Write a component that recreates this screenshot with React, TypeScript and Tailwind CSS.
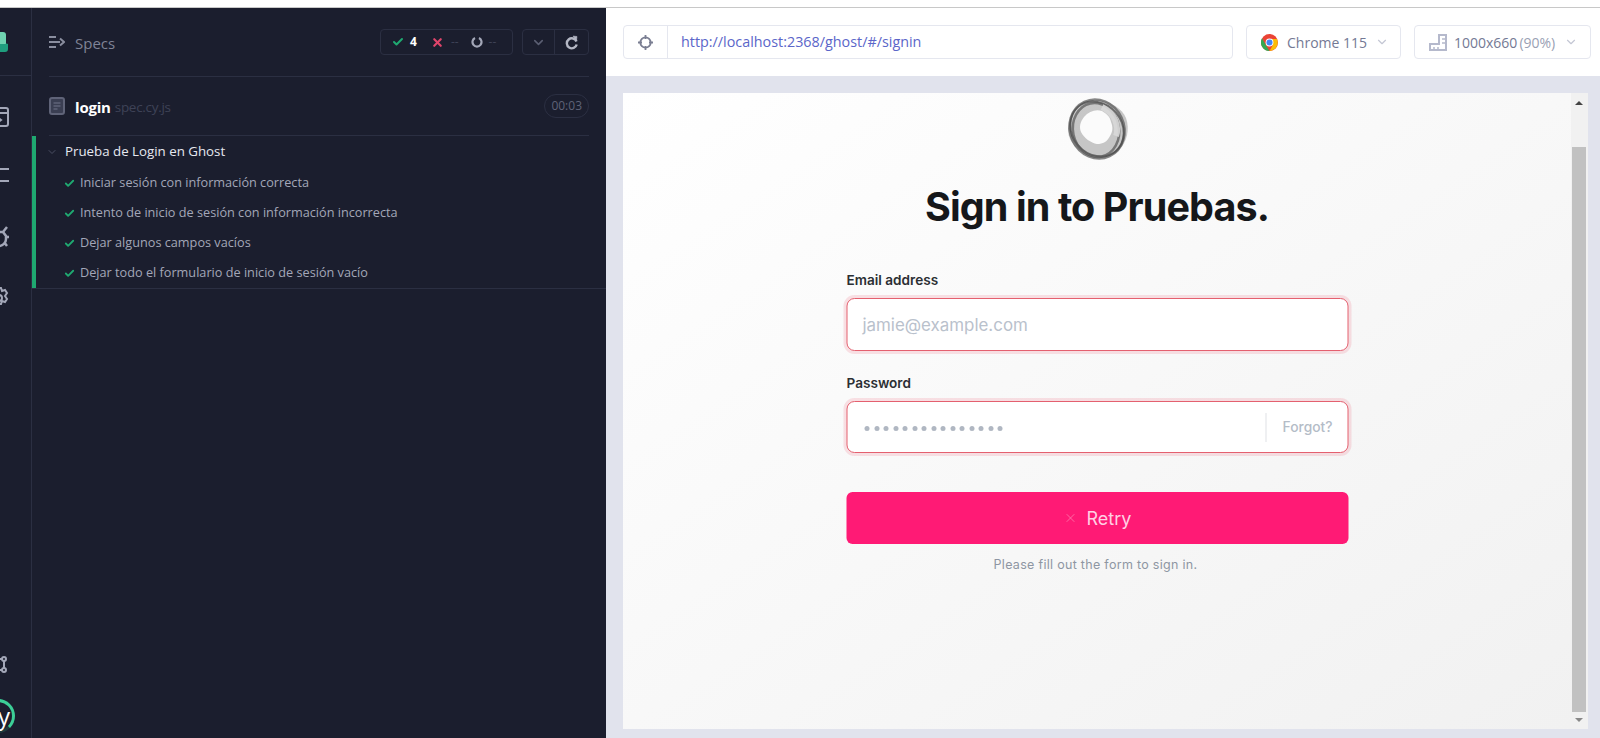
import { Check, ChevronDown, X } from "lucide-react"

const tests = [
  "Iniciar sesión con información correcta",
  "Intento de inicio de sesión con información incorrecta",
  "Dejar algunos campos vacíos",
  "Dejar todo el formulario de inicio de sesión vacío",
]

function Sidebar() {
  return (
    <div className="w-[32px] shrink-0 overflow-hidden border-r border-[#2b2f42] h-full">
      <div className="w-[64px] -ml-[33px] flex flex-col items-center h-full text-[#a3a7b8]">
        {/* logo, cut by the left edge */}
        <div className="w-full h-[68px] border-b border-[#2b2f42] flex justify-center pt-[24px]">
          <svg width="18" height="20" viewBox="0 0 18 20">
            <path d="M0 3a3 3 0 0 1 3-3h10a3 3 0 0 1 3 3v14H0z" fill="#6fd3b1" />
            <path d="M0 12h15a3 3 0 0 1 3 0v5a3 3 0 0 1-3 3H0z" fill="#1f9e7e" />
          </svg>
        </div>
        <svg className="mt-[29px]" width="24" height="24" viewBox="0 0 24 24" fill="none" stroke="currentColor" strokeWidth="2">
          <rect x="3" y="3" width="18" height="18" rx="2" />
          <path d="M3 8h18M10 12l4 3-4 3z" />
        </svg>
        <svg className="mt-[35px]" width="24" height="24" viewBox="0 0 24 24" fill="none" stroke="currentColor" strokeWidth="2">
          <path d="M4 5h18M4 17h18" />
        </svg>
        <svg className="mt-[36px]" width="24" height="24" viewBox="0 0 24 24" fill="none" stroke="currentColor" strokeWidth="2.5">
          <path d="M8 8h8l3 4v3a7 7 0 0 1-14 0v-3zM20 3l-4 5M22 13h-3M20 22l-3-4" />
        </svg>
        <svg className="mt-[38px]" width="24" height="24" viewBox="0 0 24 24" fill="none" stroke="currentColor" strokeWidth="2">
          <circle cx="12" cy="12" r="3" />
          <path d="M10 2h4l1 3 3-1 2 3-2 3 2 3-2 3-3-1-1 3h-4l-1-3-3 1-2-3 2-2-2-3 2-3 3 1z" />
        </svg>
        <div className="flex-1" />
        <svg className="mb-[23px]" width="24" height="24" viewBox="0 0 24 24" fill="none" stroke="currentColor" strokeWidth="2">
          <circle cx="7" cy="7" r="2" />
          <circle cx="17" cy="7" r="2" />
          <circle cx="7" cy="18" r="2" />
          <circle cx="17" cy="18" r="2" />
          <path d="M9 7h6M9 18h6M17 9v7" />
        </svg>
        <div className="mb-[5px] w-[34px] h-[34px] rounded-full border-[3px] border-[#3ccf97] border-b-[#1f3a3d] flex items-center justify-center text-white text-[24px] leading-none -translate-x-[1px] font-['Open_Sans',sans-serif] pl-[12px]">
          y
        </div>
      </div>
    </div>
  )
}

function Reporter() {
  return (
    <div className="w-[574px] shrink-0 h-full flex flex-col font-['Open_Sans',sans-serif]">
      <div className="mx-[17px] h-[69px] shrink-0 border-b border-[#2b2f42] flex items-center">
        <svg width="16" height="14" viewBox="0 0 16 14" fill="none" stroke="#8a8e9f" strokeWidth="2">
          <path d="M0 2h7M0 7h11M0 12h7M11 3.5L15 7l-4 3.5" />
        </svg>
        <span className="ml-[10px] mt-[3px] text-[15px] text-[#7f8396]">Specs</span>
        <div className="flex-1" />
        <div className="w-[133px] h-[26px] rounded-[4px] border border-[#2b2f42] flex items-center pl-[11px] text-[12px]">
          <Check size={12} strokeWidth={4} className="text-[#1fa971]" />
          <span className="ml-[6px] text-white font-bold">4</span>
          <X size={13} strokeWidth={4} className="ml-[14px] text-[#e0456b]" />
          <span className="ml-[7px] text-[#3e4256]">--</span>
          <svg className="ml-[12px]" width="12" height="12" viewBox="0 0 12 12" fill="none" stroke="#a3a7b8" strokeWidth="2.2">
            <path d="M4 2a4.5 4.5 0 1 0 4 0" />
          </svg>
          <span className="ml-[6px] text-[#3e4256]">--</span>
        </div>
        <div className="ml-[9px] w-[67px] h-[26px] rounded-[4px] border border-[#2b2f42] flex items-center">
          <div className="w-[32px] h-full border-r border-[#2b2f42] flex items-center justify-center">
            <ChevronDown size={15} strokeWidth={2.5} className="text-[#5a5e72]" />
          </div>
          <div className="flex-1 flex items-center justify-center">
            <svg width="14" height="15" viewBox="0 0 14 15" fill="none" stroke="#b4b7c4" strokeWidth="2.4">
              <path d="M11.5 6.5a5 5 0 1 0 .2 3" />
              <path d="M8 1l4 0.5-0.5 4.5z" fill="#b4b7c4" strokeWidth="0.5" />
            </svg>
          </div>
        </div>
      </div>
      <div className="mx-[17px] h-[59px] shrink-0 border-b border-[#2b2f42] flex items-center">
        <svg width="16" height="18" viewBox="0 0 16 18" fill="#3a3e52" stroke="#5f6378" strokeWidth="2">
          <rect x="1" y="1" width="14" height="16" rx="2" />
          <path d="M4.5 6h7M4.5 9h7M4.5 12h4" strokeWidth="1.5" />
        </svg>
        <span className="ml-[10px] mt-[2px] text-[15px] font-bold text-white tracking-[-0.2px]">login</span>
        <span className="ml-[4px] mt-[2px] text-[13.5px] text-[#3e4256] tracking-[-0.3px]">spec.cy.js</span>
        <div className="flex-1" />
        <div className="h-[24px] px-[6px] rounded-full border border-[#2b2f42] text-[12px] leading-none text-[#5f6378] flex items-center">00:03</div>
      </div>
      <div className="h-[153px] shrink-0 border-b border-[#2b2f42] flex flex-col">
        <div className="border-l-[4px] border-[#1fa971] h-full">
          <div className="h-[32px] flex items-center pl-[10px]">
            <ChevronDown size={12} className="text-[#4a4e62]" />
            <span className="ml-[7px] text-[13.3px] text-[#e6e8f0]">Prueba de Login en Ghost</span>
          </div>
          {tests.map((t) => (
            <div key={t} className="h-[30px] flex items-center pl-[28px]">
              <Check size={11} strokeWidth={4} className="text-[#1fa971]" />
              <span className="ml-[5px] text-[12.7px] text-[#a3a7b8]">{t}</span>
            </div>
          ))}
        </div>
      </div>
    </div>
  )
}

function ToolBox({ className, children }: { className: string; children: React.ReactNode }) {
  return <div className={`h-[34px] rounded-[4px] border border-[#e5e7ef] flex items-center ${className}`}>{children}</div>
}

function ChromeIcon() {
  return (
    <svg width="17" height="17" viewBox="0 0 48 48">
      <circle cx="24" cy="24" r="24" fill="#ea4335" />
      <path d="M24 48A24 24 0 0 1 3 12l11 20z" fill="#34a853" />
      <path d="M24 48l10-18-10-16h21a24 24 0 0 1-21 34z" fill="#fbbc05" />
      <circle cx="24" cy="24" r="11" fill="#fff" />
      <circle cx="24" cy="24" r="8.5" fill="#4285f4" />
    </svg>
  )
}

function RulerIcon() {
  return (
    <svg width="18" height="17" viewBox="0 0 18 17" fill="none" stroke="#b5b9cc" strokeWidth="2">
      <path d="M1 16V10h9V1h7v15z" />
      <path d="M5 16v-3M9 16v-3M13 5h4M13 9h4" strokeWidth="1.5" />
    </svg>
  )
}

function Logo() {
  return (
    <svg className="overflow-visible" width="66" height="62" viewBox="0 0 66 62" fill="none">
      <path d="M36 1c10 2 22 8 26 18 4 11 1 24-7 32-8 8-20 10-30 6C14 52 5 44 4 32 3 18 20-2 36 1z" fill="#9a9a9a" opacity="0.55" />
      <ellipse cx="33" cy="30" rx="27" ry="30" stroke="#555" strokeWidth="2.5" opacity="0.7" transform="rotate(-25 33 30)" />
      <ellipse cx="33" cy="30" rx="25" ry="29" stroke="#444" strokeWidth="2" opacity="0.7" transform="rotate(-40 33 30)" />
      <ellipse cx="32" cy="31" rx="23" ry="27" stroke="#555" strokeWidth="2.5" opacity="0.7" transform="rotate(-12 32 31)" />
      <path d="M38 8c6 3 11 8 13 13 2 5 3 11 1 16" stroke="#d8d8d8" strokeWidth="6" opacity="0.9" />
      <path d="M38 12c5 3 8 6 9 11 2 5 2 9-1 14-3 6-7 8-13 8-6-1-13-6-16-12-2-5-1-10 3-15 5-6 12-8 18-6z" fill="#fbfbfb" />
    </svg>
  )
}

function Aut() {
  return (
    <div className="flex-1 flex flex-col bg-[#e1e3ed]">
      <div className="h-[68px] shrink-0 bg-white flex items-center pl-[17px] pr-[9px] font-['Open_Sans',sans-serif]">
        <ToolBox className="w-[610px]">
          <div className="w-[44px] h-full border-r border-[#e5e7ef] flex items-center justify-center">
            <svg width="15" height="15" viewBox="0 0 15 15" fill="none" stroke="#7a7e92" strokeWidth="1.8">
              <circle cx="7.5" cy="7.5" r="5.2" />
              <path d="M7.5 0v4M7.5 11v4M0 7.5h4M11 7.5h4" />
            </svg>
          </div>
          <span className="ml-[13px] text-[14.35px] text-[#5b66c9]">http://localhost:2368/ghost/#/signin</span>
        </ToolBox>
        <ToolBox className="ml-[13px] w-[155px] pl-[14px]">
          <ChromeIcon />
          <span className="ml-[9px] text-[14px] text-[#747994]">Chrome 115</span>
          <ChevronDown size={14} className="ml-[8px] text-[#c4c7d4]" />
        </ToolBox>
        <ToolBox className="ml-[13px] w-[177px] pl-[14px]">
          <RulerIcon />
          <span className="ml-[7px] text-[14px] text-[#747994]">1000x660</span>
          <span className="ml-[2px] text-[14px] text-[#9a9fb4]">(90%)</span>
          <ChevronDown size={14} className="ml-[9px] text-[#c4c7d4]" />
        </ToolBox>
      </div>
      <div className="mt-[17px] ml-[17px] mr-[12px] h-[636px] flex bg-white overflow-hidden">
        <div className="flex-1 bg-gradient-to-br from-white to-[#f1f1f1] flex flex-col items-center pt-[6px] font-['Inter',sans-serif]">
          <Logo />
          <h1 className="mt-[23px] text-[39.5px] leading-[46px] font-bold tracking-[-0.9px] text-[#15171a]">Sign in to Pruebas.</h1>
          <div className="mt-[41px] w-[502px] flex flex-col translate-x-[0.5px]">
            <label className="text-[13.6px] leading-[18px] font-semibold text-[#2b2f33]">Email address</label>
            <div className="mt-[9px] h-[53px] rounded-[8px] bg-white border border-[#e4606f] shadow-[0_0_0_3px_rgba(240,100,120,0.18)] flex items-center pl-[15px]">
              <span className="mt-[3px] text-[16.9px] text-[#b9c1cc]">jamie@example.com</span>
            </div>
            <label className="mt-[23px] text-[13.6px] leading-[18px] font-semibold text-[#2b2f33]">Password</label>
            <div className="mt-[9px] h-[52px] rounded-[8px] bg-white border border-[#e4606f] shadow-[0_0_0_3px_rgba(240,100,120,0.18)] flex items-center pl-[17px]">
              <div className="mt-[3px] flex gap-[4.5px]">
                {Array.from({ length: 15 }).map((_, i) => (
                  <span key={i} className="w-[5px] h-[5px] rounded-full bg-[#b0b7c2]" />
                ))}
              </div>
              <div className="flex-1" />
              <div className="h-[29px] border-l border-[#dfe1e5] pl-[16px] pr-[15px] flex items-center text-[13.8px] font-medium text-[#b4bcc7]">Forgot?</div>
            </div>
            <div className="mt-[39px] h-[52px] rounded-[6px] bg-[#ff1a75] flex items-center justify-center text-[#ffd0e3]">
              <X size={14} strokeWidth={1.2} className="text-[#ff8ab8]" />
              <span className="ml-[9px] text-[18px]">Retry</span>
            </div>
            <p className="mt-[12px] pr-[4px] text-center text-[12.5px] leading-[18px] tracking-[0.3px] text-[#8e96a3]">Please fill out the form to sign in.</p>
          </div>
        </div>
        <div className="w-[17px] shrink-0 bg-[#f1f1f1] flex flex-col items-center pr-[1px]">
          <div className="h-[54px] w-full shrink-0 flex justify-center pt-[8px]">
            <span className="w-0 h-0 border-x-[4px] border-x-transparent border-b-[4px] border-b-[#444]" />
          </div>
          <div className="w-[14px] flex-1 bg-[#c1c1c1]" />
          <div className="h-[17px] w-full shrink-0 flex justify-center pt-[6px]">
            <span className="w-0 h-0 border-x-[4px] border-x-transparent border-t-[4px] border-t-[#888]" />
          </div>
        </div>
      </div>
    </div>
  )
}

export default function App() {
  return (
    <div className="w-[1600px] h-[738px] overflow-hidden flex flex-col bg-white">
      <div className="h-[8px] shrink-0 bg-white border-b border-[#c8c8c8] shadow-[0_1px_2px_rgba(0,0,0,0.2)]" />
      <div className="flex-1 min-h-0 flex">
        <div className="flex h-full bg-[#1b1e2e]">
          <Sidebar />
          <Reporter />
        </div>
        <Aut />
      </div>
    </div>
  )
}
